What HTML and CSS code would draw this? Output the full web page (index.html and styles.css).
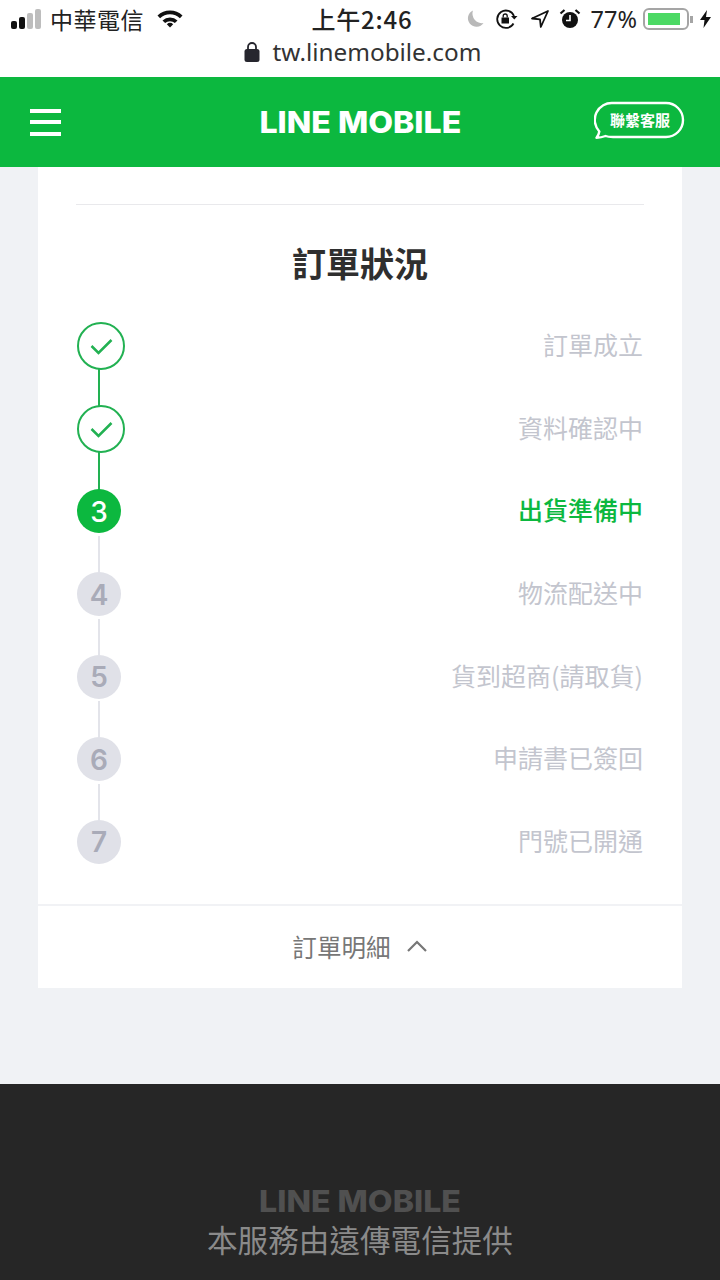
FILE: index.html
```html
<!DOCTYPE html>
<html>
<head>
<meta charset="utf-8">
<title>LINE MOBILE</title>
<link rel="stylesheet" href="styles.css">
</head>
<body>

<div class="browser">
	<div class="status">
		<div class="status-left">
			<span class="signal"><i class="on"></i><i class="on"></i><i></i><i></i></span>
			<span class="carrier">中華電信</span>
			<svg class="wifi" width="28" height="20" viewBox="0 0 28 20">
				<path d="M1.500 7.500a18 18 0 0 1 25 0l-2.600 2.700a14.300 14.300 0 0 0-19.800 0z" fill="#111"/>
				<path d="M6.500 12.500a11 11 0 0 1 15 0l-2.600 2.600a7.300 7.300 0 0 0-9.800 0z" fill="#111"/>
				<path d="M10.800 16.200a4.800 4.800 0 0 1 6.400 0L14 19.500z" fill="#111"/>
			</svg>
		</div>
		<span class="clock">上午2:46</span>
		<div class="status-right">
			<svg class="moon" width="18" height="20" viewBox="0 0 18 20"><path d="M7 1.500a8.500 8.500 0 1 0 10.500 12.500A9.500 9.500 0 0 1 7 1.500z" fill="#b9b9b9"/></svg>
			<svg class="rotation" width="23" height="22" viewBox="0 0 23 22" fill="none" stroke="#111" stroke-width="1.800">
				<path d="M18.500 15.500A8.700 8.700 0 1 1 19 8"/>
				<path d="M16 8h6.500l-3.200 3.500z" fill="#111" stroke="none"/>
				<rect x="6.500" y="9.500" width="7.500" height="6" fill="#111" stroke="none"/>
				<path d="M8.200 9.500V8a2 2 0 0 1 4 0v1.500" stroke-width="1.300"/>
			</svg>
			<svg width="20" height="20" viewBox="0 0 20 20" fill="none" stroke="#111" stroke-width="1.800" stroke-linejoin="round"><path d="M18 2 2 9.500l8 .8.800 7.700z"/></svg>
			<svg width="22" height="22" viewBox="0 0 22 22">
				<circle cx="11" cy="12" r="8" fill="#111"/>
				<path d="M11 7v5.500H7" fill="none" stroke="#fff" stroke-width="1.600"/>
				<path d="M1.500 5.500 5.500 2M20.500 5.500 16.500 2" stroke="#111" stroke-width="2.200"/>
			</svg>
			<span class="percent">77%</span>
			<span class="battery"><i></i></span>
			<span class="battery-tip"></span>
			<svg class="bolt" width="11" height="18" viewBox="0 0 11 18"><path d="M7 0 0 10h4.500L3.500 18 11 7H6z" fill="#111"/></svg>
		</div>
	</div>
	<div class="address">
		<svg width="16" height="20" viewBox="0 0 16 20">
			<rect x="0.500" y="7" width="15" height="13" rx="2.500" fill="#26262e"/>
			<path d="M4 8V5a4 4 0 0 1 8 0v3" fill="none" stroke="#26262e" stroke-width="1.800"/>
		</svg>
		<span>tw.linemobile.com</span>
	</div>
</div>

<header class="topbar">
	<div class="burger"><i></i><i></i><i></i></div>
	<div class="logo">LINE MOBILE</div>
	<a class="support">
		<svg width="92" height="38" viewBox="0 0 92 38">
			<path d="M19 2h53a17 17 0 0 1 0 34H19c-3 0-5 0-7.500-1-2.500 1-5.500 1.700-9 1.700 1.500-1.700 2.500-3.700 2.800-6.200A17 17 0 0 1 19 2z" fill="none" stroke="#fff" stroke-width="2.400" stroke-linejoin="round"/>
		</svg>
		<span>聯繫客服</span>
	</a>
</header>

<main class="page">
	<section class="card">
		<div class="card-body">
			<div class="rule"></div>
			<h1>訂單狀況</h1>
			<ol class="steps">
				<li class="step done">
					<span class="dot"><svg width="23" height="17" viewBox="0 0 23 17"><path d="M1.500 8 8.500 15 21.500 2" fill="none" stroke="#22b152" stroke-width="2.500"/></svg></span>
					<span class="label">訂單成立</span>
				</li>
				<li class="step done">
					<span class="dot"><svg width="23" height="17" viewBox="0 0 23 17"><path d="M1.500 8 8.500 15 21.500 2" fill="none" stroke="#22b152" stroke-width="2.500"/></svg></span>
					<span class="label">資料確認中</span>
				</li>
				<li class="step current">
					<span class="dot">3</span>
					<span class="label">出貨準備中</span>
				</li>
				<li class="step">
					<span class="dot">4</span>
					<span class="label">物流配送中</span>
				</li>
				<li class="step">
					<span class="dot">5</span>
					<span class="label">貨到超商(請取貨)</span>
				</li>
				<li class="step">
					<span class="dot">6</span>
					<span class="label">申請書已簽回</span>
				</li>
				<li class="step">
					<span class="dot">7</span>
					<span class="label">門號已開通</span>
				</li>
			</ol>
		</div>
		<div class="details">
			<span>訂單明細</span>
			<svg width="22" height="14" viewBox="0 0 22 14"><path d="M2 12 11 3l9 9" fill="none" stroke="#777" stroke-width="2.200"/></svg>
		</div>
	</section>
</main>

<footer class="footer">
	<div class="logo footer-logo">LINE MOBILE</div>
	<p>本服務由遠傳電信提供</p>
</footer>

</body>
</html>
```

FILE: styles.css
```css
* {
	box-sizing: border-box;
}

body {
	margin: 0;
	width: 720px;
	height: 1280px;
	overflow: hidden;
	background-color: #f0f2f5;
	font-family: "Noto Sans CJK TC", "Noto Sans", sans-serif;
	color: #222;
}

.browser {
	height: 77px;
	background-color: #fff;
}

.status {
	height: 38px;
	padding: 0 9px 0 11px;
	display: grid;
	grid-template-columns: 1fr auto 1fr;
	align-items: center;
}

.status-left, .status-right, .address, .signal {
	display: flex;
	align-items: center;
}

.signal {
	gap: 2px;
	align-items: flex-end;
	margin-right: 9px;
}

.signal i {
	display: block;
	width: 6px;
	background-color: #bdbdbd;
	border-radius: 2px;
}

.signal i.on {
	background-color: #111;
}

.signal i:nth-child(1) { height: 8px; }
.signal i:nth-child(2) { height: 12px; }
.signal i:nth-child(3) { height: 16px; }
.signal i:nth-child(4) { height: 20px; }

.carrier {
	font-size: 23px;
	letter-spacing: 0.5px;
	line-height: 1;
}

.wifi {
	margin-left: 12px;
	margin-bottom: 2px;
}

.clock {
	font-size: 24px;
	font-weight: 500;
	letter-spacing: 0.8px;
	line-height: 1;
	margin-left: 2px;
}

.status-right {
	justify-content: flex-end;
	gap: 9px;
}

.moon {
	margin-right: 2px;
}

.rotation {
	margin-right: 3px;
}

.percent {
	font-family: "Noto Sans", sans-serif;
	font-size: 23.500px;
	line-height: 1;
	margin: 2px 0 0 1px;
}

.battery {
	display: block;
	width: 46px;
	height: 22px;
	margin-left: -3px;
	padding: 3px;
	border: 2px solid #a5a5a5;
	border-radius: 6px;
}

.battery i {
	display: block;
	width: 32px;
	height: 12px;
	background-color: #4cd964;
}

.battery-tip {
	width: 3px;
	height: 7px;
	margin-left: -8px;
	background-color: #a5a5a5;
}

.bolt {
	margin-left: -2px;
}

.address {
	justify-content: center;
	gap: 13px;
	height: 30px;
	padding: 0 0 2px 5px;
	font-size: 24.300px;
	line-height: 1;
	color: #333;
	font-family: "Noto Sans", sans-serif;
}

.topbar {
	height: 90px;
	padding: 0 30px;
	display: grid;
	grid-template-columns: 1fr auto 1fr;
	align-items: center;
	background-color: #0cb83f;
}

.burger {
	width: 31px;
	display: flex;
	flex-direction: column;
	gap: 7.500px;
}

.burger i {
	display: block;
	height: 4px;
	background-color: #fff;
}

.logo {
	font-family: Inter, sans-serif;
	font-weight: 800;
	font-size: 30px;
	line-height: 36px;
	color: #fff;
	text-align: center;
	transform: scaleX(1.07);
}

.support {
	position: relative;
	width: 92px;
	height: 38px;
	justify-self: end;
	margin: -4px 4px 0 0;
	display: flex;
	align-items: center;
	justify-content: center;
	color: #fff;
}

.support svg {
	position: absolute;
	left: 0;
	top: 0;
}

.support span {
	font-size: 15px;
	font-weight: 700;
	margin-bottom: 1px;
}

.page {
	height: 917px;
	padding: 0 38px;
}

.card {
	height: 821px;
	background-color: #fff;
}

.card-body {
	height: 737px;
	padding: 37px 38px 0;
}

.rule {
	height: 1px;
	background-color: #e9e9ec;
}

.card-body h1 {
	margin: 34px 0 18px;
	font-size: 34px;
	line-height: 48px;
	font-weight: 700;
	text-align: center;
	color: #2f2f2f;
}

.steps {
	list-style: none;
	margin: 0;
	padding: 0;
	display: flex;
	flex-direction: column;
}

.step {
	position: relative;
	height: 82.600px;
	display: flex;
	align-items: center;
	justify-content: space-between;
	color: #c3c5ce;
}

.step:not(:last-child)::after {
	content: "";
	position: absolute;
	left: 22px;
	top: 66px;
	width: 2px;
	height: 36px;
	background-color: #e3e4ea;
}

.step.done::after {
	top: 41px;
	height: 82px;
	background-color: #22b152;
}

.dot {
	position: relative;
	z-index: 1;
	width: 44px;
	height: 44px;
	margin-left: 1px;
	padding-top: 1px;
	border-radius: 50%;
	display: flex;
	align-items: center;
	justify-content: center;
	background-color: #e0e1e8;
	color: #a9abb8;
	font-family: Inter, sans-serif;
	font-size: 28px;
	font-weight: 600;
}

.step.done .dot {
	width: 48px;
	height: 48px;
	background-color: #fff;
	border: 2px solid #22b152;
}

.step.current .dot {
	background-color: #0cb83f;
	color: #fff;
	font-weight: 500;
}

.label {
	font-size: 25px;
	line-height: 1;
	margin: 0 1px 3px 0;
}

.step.current .label {
	color: #0cb83f;
	font-weight: 500;
}

.details {
	height: 84px;
	padding-bottom: 3px;
	border-top: 2px solid #f1f2f5;
	display: flex;
	align-items: center;
	justify-content: center;
	gap: 15px;
	font-size: 24.600px;
	color: #777;
}

.footer {
	height: 196px;
	background-color: #262626;
	padding-top: 99px;
	text-align: center;
}

.footer-logo {
	color: #505050;
}

.footer p {
	margin: 0;
	font-size: 30.600px;
	line-height: 41px;
	color: #8a8a8a;
}
```
